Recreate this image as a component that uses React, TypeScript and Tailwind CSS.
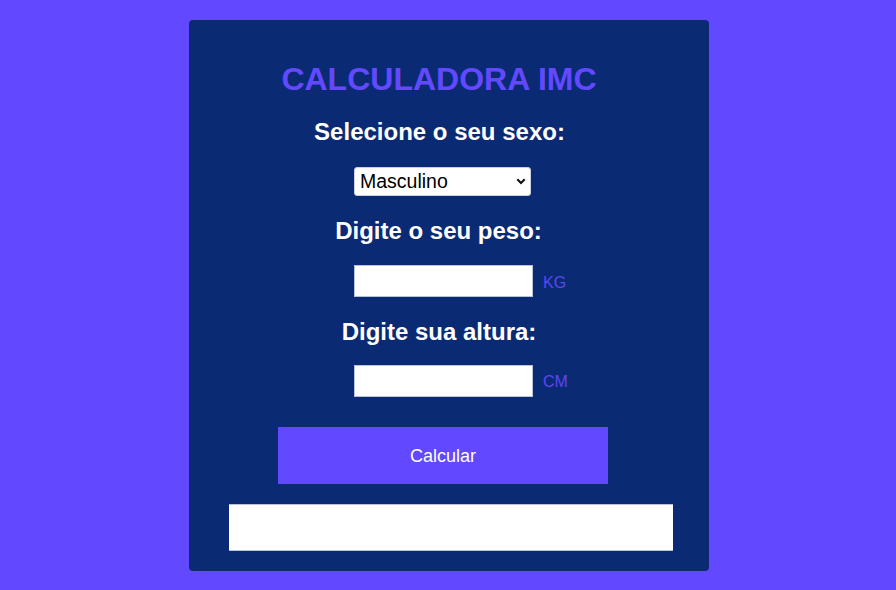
import React from "react";

export default function App() {
  return (
    <div
      className="min-h-screen w-full bg-[#6249ff] pt-[20px] pb-[19px]"
      style={{ fontFamily: '"Liberation Sans", Arial, sans-serif' }}
    >
      <div className="mx-auto ml-[189px] flex w-[520px] flex-col items-stretch rounded-[4px] bg-[#0b2a74] pt-[41px] pb-[20px]">
        <h1 className="mr-[20px] text-center text-[32px] font-bold leading-[36px] text-[#6249ff]">
          CALCULADORA IMC
        </h1>
        <h2 className="mt-[21px] mr-[19px] text-center text-[24px] font-bold leading-[28px] text-white">
          Selecione o seu sexo:
        </h2>
        <div className="mt-[21px] flex pl-[165px]">
          <div className="relative h-[29px] w-[177px]">
            <select
              defaultValue="Masculino"
              className="h-full w-full appearance-none rounded-[3px] border border-[#c9cfdc] bg-white pl-[5px] text-[19.5px] leading-[27px] text-black outline-none"
            >
              <option>Masculino</option>
              <option>Feminino</option>
            </select>
            <svg
              className="pointer-events-none absolute right-[5px] top-[11px]"
              width="10"
              height="7"
              viewBox="0 0 10 7"
            >
              <path d="M1.3 1.3 L5 5 L8.7 1.3" fill="none" stroke="#111" strokeWidth="2.1" />
            </svg>
          </div>
        </div>
        <h2 className="mt-[21px] mr-[21px] text-center text-[24px] font-bold leading-[28px] text-white">
          Digite o seu peso:
        </h2>
        <div className="mt-[20px] flex items-center pl-[165px]">
          <input
            type="text"
            className="h-[32px] w-[179px] border border-[#b9c3d8] bg-white outline-none"
          />
          <span className="ml-[10px] pt-[3px] text-[16px] leading-[18px] text-[#5b47ee]">KG</span>
        </div>
        <h2 className="mt-[21px] mr-[20px] text-center text-[24px] font-bold leading-[28px] text-white">
          Digite sua altura:
        </h2>
        <div className="mt-[19px] flex items-center pl-[165px]">
          <input
            type="text"
            className="h-[32px] w-[179px] border border-[#b9c3d8] bg-white outline-none"
          />
          <span className="ml-[10px] pt-[2px] text-[16px] leading-[18px] text-[#5b47ee]">CM</span>
        </div>
        <div className="mt-[30px] flex pl-[89px]">
          <button className="h-[57px] w-[330px] bg-[#6249ff] pt-[2px] text-[18px] text-white">
            Calcular
          </button>
        </div>
        <div className="mt-[20px] flex pl-[40px]">
          <div className="h-[47px] w-[444px] border-y border-[#b9c3d8] bg-white" />
        </div>
      </div>
    </div>
  );
}
